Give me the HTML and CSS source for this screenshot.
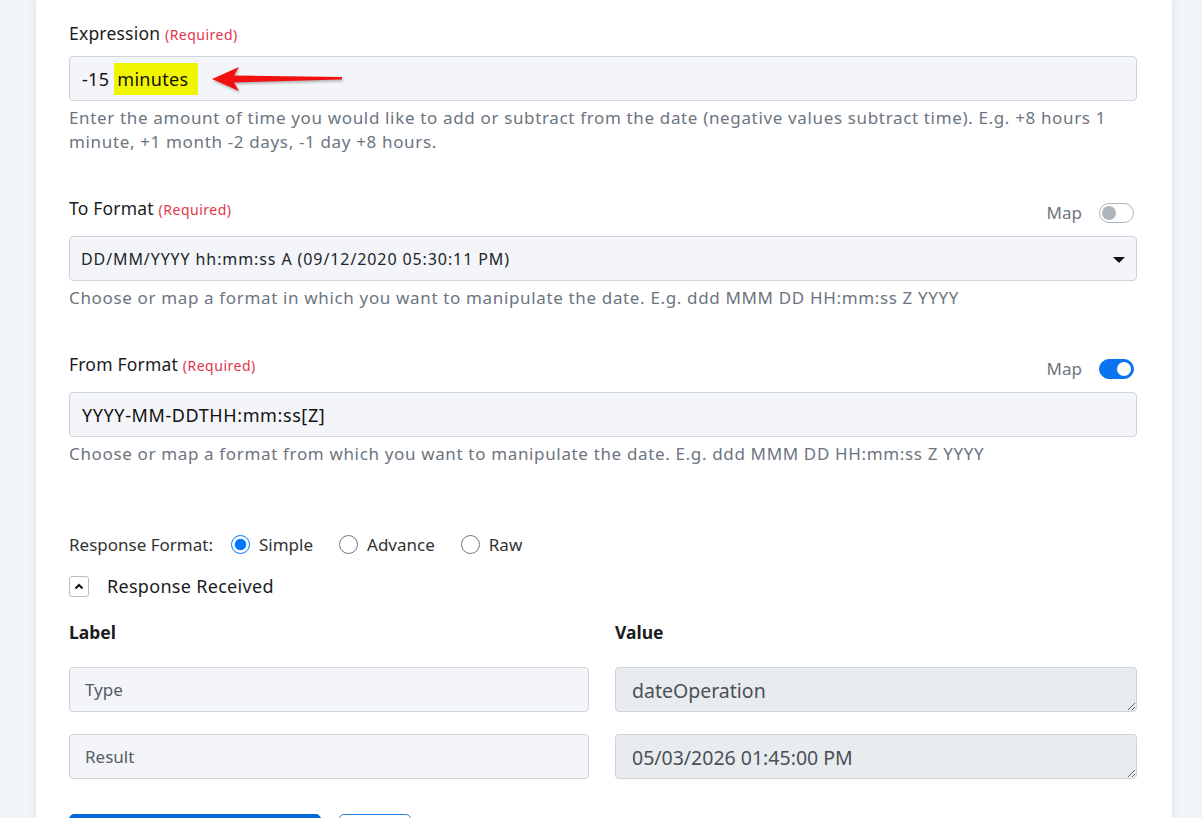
FILE: index.html
```html
<!DOCTYPE html>
<html lang="en">
<head>
  <meta charset="UTF-8">
  <meta name="viewport" content="width=device-width, initial-scale=1.0">
  <title>Date Operation - Settings</title>
  <link rel="stylesheet" href="styles.css">
</head>
<body>
  <div class="card">
    <div class="field">
      <div class="field-head">
        <label class="field-label">Expression <span class="required">(Required)</span></label>
      </div>
      <div class="control control-expr">
        <span>-15 <span class="hl">minutes</span></span>
        <svg class="pointer" width="131" height="24" viewBox="0 0 131 24">
          <path d="M0 12 L27 0 L22 8.5 L130 10 L130 12.5 L22 15.5 L27 24 Z" fill="#f21010"/>
        </svg>
      </div>
      <p class="help">Enter the amount of time you would like to add or subtract from the date (negative values subtract time). E.g. +8 hours 1 minute, +1 month -2 days, -1 day +8 hours.</p>
    </div>

    <div class="field">
      <div class="field-head">
        <label class="field-label">To Format <span class="required">(Required)</span></label>
        <div class="map-switch">
          <span>Map</span>
          <span class="switch"></span>
        </div>
      </div>
      <div class="control control-select">
        <span>DD/MM/YYYY hh:mm:ss A (09/12/2020 05:30:11 PM)</span>
        <span class="caret"></span>
      </div>
      <p class="help">Choose or map a format in which you want to manipulate the date. E.g. ddd MMM DD HH:mm:ss Z YYYY</p>
    </div>

    <div class="field">
      <div class="field-head">
        <label class="field-label">From Format <span class="required">(Required)</span></label>
        <div class="map-switch">
          <span>Map</span>
          <span class="switch on"></span>
        </div>
      </div>
      <div class="control control-mapped">YYYY-MM-DDTHH:mm:ss[Z]</div>
      <p class="help">Choose or map a format from which you want to manipulate the date. E.g. ddd MMM DD HH:mm:ss Z YYYY</p>
    </div>

    <div class="response-format">
      <span class="rf-label">Response Format:</span>
      <label class="radio"><input type="radio" name="rf" checked> Simple</label>
      <label class="radio"><input type="radio" name="rf"> Advance</label>
      <label class="radio"><input type="radio" name="rf"> Raw</label>
    </div>

    <div class="received">
      <span class="toggle-btn">
        <svg width="10" height="7" viewBox="0 0 10 7"><path d="M1.5 5.5 L5 2 L8.5 5.5" fill="none" stroke="#111" stroke-width="2"/></svg>
      </span>
      <span>Response Received</span>
    </div>

    <div class="result-grid">
      <div class="col-head">Label</div>
      <div class="col-head">Value</div>
      <div class="cell">Type</div>
      <textarea class="value" rows="1" readonly>dateOperation</textarea>
      <div class="cell">Result</div>
      <textarea class="value" rows="1" readonly>05/03/2026 01:45:00 PM</textarea>
    </div>

    <div class="actions">
      <button class="btn btn-primary"></button>
      <button class="btn btn-outline"></button>
    </div>
  </div>
</body>
</html>
```

FILE: styles.css
```css
body {
  margin: 0;
  background: #f1f4f9;
  font-family: "Noto Sans", sans-serif;
  color: #1b1c1e;
}

.card {
  margin-left: 36px;
  width: 1136px;
  box-sizing: border-box;
  background: #fff;
  box-shadow: 0 0 8px rgba(40, 60, 90, 0.12);
  padding: 21px 35px 40px 33px;
}

.field {
  margin-bottom: 42px;
}

.field-head {
  display: flex;
  justify-content: space-between;
  align-items: flex-start;
  height: 24px;
}

.field-label {
  font-size: 17.5px;
  line-height: 24px;
  letter-spacing: 0.2px;
}

.required {
  font-size: 14px;
  line-height: 1;
  letter-spacing: 0.5px;
  color: #e3344b;
}

.map-switch {
  display: flex;
  align-items: center;
  gap: 17px;
  margin-top: 5px;
  margin-right: 3px;
  font-size: 17px;
  line-height: 24px;
  color: #6c7580;
}

.field-head:has(.map-switch) {
  height: 29px;
}

.switch {
  position: relative;
  width: 33px;
  height: 18px;
  border: 1px solid #adb5bd;
  border-radius: 10px;
  background: #fff;
}

.switch::after {
  content: "";
  position: absolute;
  top: 2px;
  left: 2px;
  width: 14px;
  height: 14px;
  border-radius: 50%;
  background: #adb5bd;
}

.switch.on {
  background: #0a74f0;
  border-color: #0a74f0;
}

.switch.on::after {
  left: 17px;
  background: #fff;
}

.control {
  position: relative;
  margin-top: 11px;
  height: 45px;
  box-sizing: border-box;
  border: 1px solid #ced4da;
  border-radius: 4px;
  background: #f3f5f8;
  padding: 0 12px;
  display: flex;
  align-items: center;
  font-size: 17px;
  color: #111;
}

.control-expr {
  font-size: 18px;
  letter-spacing: 0.3px;
}

.hl {
  background: #f2f500;
  padding: 4px 10px 4px 3px;
}

.pointer {
  position: absolute;
  left: 142px;
  top: 10px;
  filter: drop-shadow(1px 2px 1px rgba(0, 0, 0, 0.25));
}

.control-select {
  padding-left: 11px;
  font-size: 16px;
  letter-spacing: 0.9px;
  color: #212529;
}

.control-mapped {
  font-size: 18px;
  letter-spacing: 0.6px;
}

.caret {
  position: absolute;
  right: 11px;
  top: 20px;
  border-left: 6px solid transparent;
  border-right: 6px solid transparent;
  border-top: 6px solid #111;
}

.help {
  margin: 5px 0 0;
  font-size: 17px;
  line-height: 24px;
  letter-spacing: 0.65px;
  color: #6c7580;
}

.response-format {
  display: flex;
  align-items: center;
  margin-top: 66px;
  height: 24px;
  font-size: 17px;
  color: #333;
}

.rf-label {
  margin-right: 18px;
}

.radio {
  display: flex;
  align-items: center;
  gap: 9px;
  margin-right: 26px;
}

.radio input {
  width: 19px;
  height: 19px;
  margin: 0;
}

.received {
  display: flex;
  align-items: center;
  gap: 18px;
  margin-top: 18px;
  font-size: 18px;
  line-height: 24px;
  letter-spacing: 0.3px;
}

.toggle-btn {
  display: flex;
  align-items: center;
  justify-content: center;
  width: 18px;
  height: 19px;
  border: 1px solid #b8bec6;
  border-radius: 3px;
}

.result-grid {
  display: grid;
  grid-template-columns: 520px 1fr;
  column-gap: 26px;
  row-gap: 22px;
  margin-top: 22px;
}

.col-head {
  font-weight: 700;
  font-size: 17.5px;
  line-height: 24px;
  margin-bottom: 1px;
}

.cell,
.value {
  height: 45px;
  box-sizing: border-box;
  border: 1px solid #ced4da;
  border-radius: 4px;
  font-size: 17px;
}

.cell {
  display: flex;
  align-items: center;
  padding: 0 15px;
  background: #f3f5f8;
  color: #555c66;
}

.value {
  width: 100%;
  margin: 0;
  padding: 9px 16px 0;
  background: #e9ecef;
  color: #495057;
  font-family: "Noto Sans", sans-serif;
  font-size: 19.5px;
  resize: vertical;
}

.actions {
  display: flex;
  gap: 18px;
  margin-top: 35px;
}

.btn {
  height: 40px;
  border-radius: 5px;
}

.btn-primary {
  width: 252px;
  background: #0067d8;
  border: 1px solid #0067d8;
}

.btn-outline {
  width: 72px;
  background: #fff;
  border: 1px solid #2a7de1;
}
```
